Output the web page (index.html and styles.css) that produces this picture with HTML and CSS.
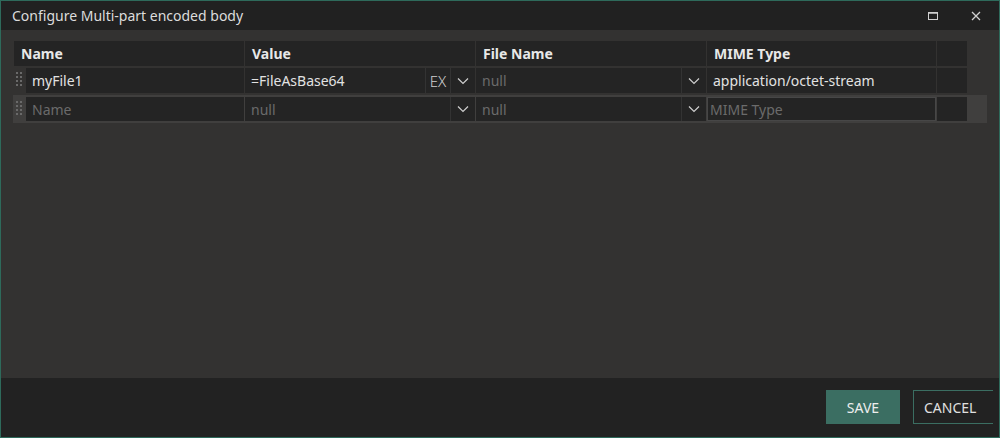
FILE: index.html
```html
<!DOCTYPE html>
<html lang="en">
<head>
    <meta charset="UTF-8">
    <title>Configure Multi-part encoded body</title>
    <link rel="stylesheet" href="styles.css">
</head>
<body>

<div class="window">
    <div class="titlebar">
        <span class="title">Configure Multi-part encoded body</span>
        <span class="win-btn">
            <svg width="12" height="10" viewBox="0 0 12 10"><rect x="1.5" y="1.5" width="9" height="7" fill="none" stroke="#d0d0d0" stroke-width="1"/><line x1="1.5" y1="2" x2="10.5" y2="2" stroke="#d0d0d0" stroke-width="1.5"/></svg>
        </span>
        <span class="win-btn">
            <svg width="10" height="10" viewBox="0 0 10 10"><path d="M1 1 L9 9 M9 1 L1 9" stroke="#d0d0d0" stroke-width="1.3"/></svg>
        </span>
    </div>

    <div class="content">
        <div class="grid">
            <div class="row head">
                <div class="cell">Name</div>
                <div class="cell">Value</div>
                <div class="cell">File Name</div>
                <div class="cell">MIME Type</div>
                <div class="cell extra"></div>
            </div>

            <div class="row">
                <div class="cell name"><span class="handle"></span><span class="field">myFile1</span></div>
                <div class="cell combo">
                    <span class="field">=FileAsBase64</span>
                    <span class="ex">EX</span>
                    <span class="chev"><svg width="12" height="8" viewBox="0 0 12 8"><path d="M1 1.5 L6 6.5 L11 1.5" fill="none" stroke="#cfcfcf" stroke-width="1.2"/></svg></span>
                </div>
                <div class="cell combo">
                    <span class="field empty">null</span>
                    <span class="chev"><svg width="12" height="8" viewBox="0 0 12 8"><path d="M1 1.5 L6 6.5 L11 1.5" fill="none" stroke="#cfcfcf" stroke-width="1.2"/></svg></span>
                </div>
                <div class="cell"><span class="field">application/octet-stream</span></div>
                <div class="cell extra"></div>
            </div>

            <div class="row new">
                <div class="cell name"><span class="handle"></span><span class="field empty">Name</span></div>
                <div class="cell combo">
                    <span class="field empty">null</span>
                    <span class="chev"><svg width="12" height="8" viewBox="0 0 12 8"><path d="M1 1.5 L6 6.5 L11 1.5" fill="none" stroke="#cfcfcf" stroke-width="1.2"/></svg></span>
                </div>
                <div class="cell combo">
                    <span class="field empty">null</span>
                    <span class="chev"><svg width="12" height="8" viewBox="0 0 12 8"><path d="M1 1.5 L6 6.5 L11 1.5" fill="none" stroke="#cfcfcf" stroke-width="1.2"/></svg></span>
                </div>
                <div class="cell boxed"><span class="field empty">MIME Type</span></div>
                <div class="cell extra"></div>
            </div>
        </div>
    </div>

    <div class="footer">
        <button class="btn save">SAVE</button>
        <button class="btn cancel">CANCEL</button>
    </div>
</div>

</body>
</html>
```

FILE: styles.css
```css
html, body {
    margin: 0;
    padding: 0;
    background: #222;
}
body {
    font-family: "Noto Sans", "Open Sans", sans-serif;
    font-size: 14px;
    color: #e2e2e2;
}
.window {
    width: 1000px;
    height: 438px;
    box-sizing: border-box;
    border: 1px solid #2e6a5b;
    display: flex;
    flex-direction: column;
    background: #333231;
}
.titlebar {
    height: 29px;
    background: #212121;
    display: flex;
    align-items: center;
    padding-left: 11px;
}
.title {
    flex: 1;
    font-size: 14px;
    color: #dcdcdc;
}
.win-btn {
    width: 40px;
    height: 29px;
    display: flex;
    align-items: center;
    justify-content: center;
    margin-right: 3px;
}
.content {
    flex: 1;
    padding: 11px 0 0 13px;
}
.grid {
    display: flex;
    flex-direction: column;
    gap: 2px;
}
.row {
    display: grid;
    grid-template-columns: 230px 230px 230px 229px 30px;
    column-gap: 1px;
    height: 25px;
    width: 954px;
}
.row.new {
    height: 24px;
    padding: 2px 0 2px 1px;
    margin-left: -1px;
    width: 973px;
    background: #403f3e;
}
.cell {
    background: #242424;
    display: flex;
    align-items: center;
    overflow: hidden;
}
.head .cell {
    font-weight: bold;
    color: #e8e8e8;
    padding-left: 7px;
}
.field {
    flex: 1;
    padding-left: 6px;
    white-space: nowrap;
}
.field.empty {
    color: #6b6b6b;
}
.cell.name {
    background: transparent;
}
.cell.name .field {
    background: #242424;
    height: 100%;
    display: flex;
    align-items: center;
}
.handle {
    flex: none;
    width: 12px;
    height: 100%;
    background-image:
        linear-gradient(90deg, #6a6a6a 2px, transparent 2px, transparent 4px, #6a6a6a 4px, #6a6a6a 6px, transparent 6px);
    background-size: 12px 4px;
    background-position: 2px 4px;
    -webkit-mask-image: repeating-linear-gradient(180deg, #000 0 2px, transparent 2px 4px);
    -webkit-mask-position: 0 4px;
    -webkit-mask-size: 100% 16px;
    -webkit-mask-repeat: no-repeat;
    mask-image: repeating-linear-gradient(180deg, #000 0 2px, transparent 2px 4px);
    mask-position: 0 4px;
    mask-size: 100% 16px;
    mask-repeat: no-repeat;
}
.combo .ex,
.combo .chev {
    height: 100%;
    display: flex;
    align-items: center;
    justify-content: center;
    border-left: 1px solid #333;
    flex: none;
}
.combo .ex {
    width: 24px;
    font-size: 15px;
    font-weight: 300;
    color: #cfcfcf;
    letter-spacing: 0;
}
.combo .chev {
    width: 24px;
}
.cell.extra {
    background: #242424;
}
.cell.boxed {
    box-sizing: border-box;
    border: 1px solid #474747;
}
.cell.boxed .field {
    padding-left: 2px;
}
.footer {
    height: 59px;
    background: #222;
    display: flex;
    align-items: flex-start;
    padding-top: 12px;
    padding-left: 825px;
    box-sizing: border-box;
    overflow: hidden;
}
.btn {
    font-family: "Noto Sans", "Open Sans", sans-serif;
    font-size: 14px;
    height: 34px;
    color: #eee;
    border: none;
    cursor: pointer;
}
.save {
    width: 74px;
    background: #3b6e62;
}
.cancel {
    margin-left: 13px;
    width: 80px;
    background: transparent;
    border: 1px solid #3b6e62;
    border-right: none;
    text-align: left;
    padding-left: 10px;
    color: #e0e0e0;
}
```
